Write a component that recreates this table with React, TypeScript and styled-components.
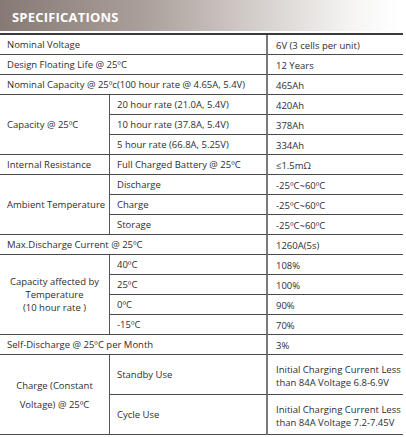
import React from "react";
import styled, { createGlobalStyle } from "styled-components";

const Global = createGlobalStyle`
  html, body { margin: 0; padding: 0; background: #ffffff; }
  body { font-family: "Open Sans", "Liberation Sans", sans-serif; color: #2e2e2e; }
`;

const Page = styled.div`
  width: 403px;
  display: flex;
  flex-direction: column;
`;

const Header = styled.div`
  height: 31px;
  display: flex;
  align-items: center;
  padding-left: 12px;
  padding-top: 2px;
  box-sizing: border-box;
  background: linear-gradient(to right, #877a74 0%, #a99e99 35%, #d6d0cd 65%, #f6f5f4 88%, #ffffff 100%);
  margin-right: 3px;
`;

const Title = styled.h1`
  margin: 0;
  font-size: 13px;
  font-weight: 700;
  color: #ffffff;
  letter-spacing: 0.2px;
`;

const Grid = styled.div`
  margin-top: 2px;
  border-top: 2px solid #3a3a3a;
  display: grid;
  grid-template-columns: 110px 158px 1fr;
  grid-auto-rows: 20px;
  font-size: 9.5px;
  line-height: 12px;
`;

type CellProps = {
  $col: string;
  $row?: string;
  $center?: boolean;
  $pad?: number;
};

const Cell = styled.div<CellProps>`
  grid-column: ${(p) => p.$col};
  grid-row: ${(p) => p.$row ?? "auto"};
  display: flex;
  align-items: center;
  justify-content: ${(p) => (p.$center ? "center" : "flex-start")};
  text-align: ${(p) => (p.$center ? "center" : "left")};
  padding-left: ${(p) => p.$pad ?? 7}px;
  border-bottom: 1px solid #4a4a4a;
  box-sizing: border-box;
  min-width: 0;
  white-space: nowrap;
`;

const LabelCell = styled(Cell)`
  border-right: 1px solid #555;
`;

const MidCell = styled(Cell)`
  border-right: 2px solid #7a7a7a;
  padding-left: 7px;
`;

const ValueCell = styled(Cell)`
  padding-left: 8px;
  padding-top: 2px;
`;

const WideCell = styled(Cell)`
  border-right: 2px solid #7a7a7a;
`;

const Multi = styled.span<{ $lh: number }>`
  white-space: normal;
  line-height: ${(p) => p.$lh}px;
`;

const ValueText = styled.span`
  white-space: normal;
  line-height: 13px;
`;

const simple: [string, string][] = [
  ["Nominal Voltage", "6V (3 cells per unit)"],
  ["Design Floating Life @ 25ºC", "12 Years"],
  ["Nominal Capacity @ 25ºc(100 hour rate @ 4.65A, 5.4V)", "465Ah"],
];

export default function App() {
  return (
    <>
      <Global />
      <Page>
        <Header>
          <Title>SPECIFICATIONS</Title>
        </Header>
        <Grid>
          {simple.map(([a, b]) => (
            <React.Fragment key={a}>
              <WideCell $col="1 / 3">{a}</WideCell>
              <ValueCell $col="3">{b}</ValueCell>
            </React.Fragment>
          ))}

          <LabelCell $col="1" $row="span 3">Capacity @ 25ºC</LabelCell>
          <MidCell $col="2">20 hour rate (21.0A, 5.4V)</MidCell>
          <ValueCell $col="3">420Ah</ValueCell>
          <MidCell $col="2">10 hour rate (37.8A, 5.4V)</MidCell>
          <ValueCell $col="3">378Ah</ValueCell>
          <MidCell $col="2">5 hour rate (66.8A, 5.25V)</MidCell>
          <ValueCell $col="3">334Ah</ValueCell>

          <LabelCell $col="1">Internal Resistance</LabelCell>
          <MidCell $col="2">Full Charged Battery @ 25ºC</MidCell>
          <ValueCell $col="3">≤1.5mΩ</ValueCell>

          <LabelCell $col="1" $row="span 3">Ambient Temperature</LabelCell>
          <MidCell $col="2">Discharge</MidCell>
          <ValueCell $col="3">-25ºC~60ºC</ValueCell>
          <MidCell $col="2">Charge</MidCell>
          <ValueCell $col="3">-25ºC~60ºC</ValueCell>
          <MidCell $col="2">Storage</MidCell>
          <ValueCell $col="3">-25ºC~60ºC</ValueCell>

          <WideCell $col="1 / 3">Max.Discharge Current @ 25ºC</WideCell>
          <ValueCell $col="3">1260A(5s)</ValueCell>

          <LabelCell $col="1" $row="span 4" $center $pad={0}>
            <Multi $lh={13}>
              Capacity affected by
              <br />
              Temperature
              <br />
              (10 hour rate )
            </Multi>
          </LabelCell>
          <MidCell $col="2">40ºC</MidCell>
          <ValueCell $col="3">108%</ValueCell>
          <MidCell $col="2">25ºC</MidCell>
          <ValueCell $col="3">100%</ValueCell>
          <MidCell $col="2">0ºC</MidCell>
          <ValueCell $col="3">90%</ValueCell>
          <MidCell $col="2">-15ºC</MidCell>
          <ValueCell $col="3">70%</ValueCell>

          <WideCell $col="1 / 3">Self-Discharge @ 25ºC per Month</WideCell>
          <ValueCell $col="3">3%</ValueCell>

          <LabelCell $col="1" $row="span 4" $center $pad={0}>
            <Multi $lh={19}>
              Charge (Constant
              <br />
              Voltage) @ 25ºC
            </Multi>
          </LabelCell>
          <MidCell $col="2" $row="span 2">Standby Use</MidCell>
          <ValueCell $col="3" $row="span 2">
            <ValueText>
              Initial Charging Current Less
              <br />
              than 84A Voltage 6.8-6.9V
            </ValueText>
          </ValueCell>
          <MidCell $col="2" $row="span 2">Cycle Use</MidCell>
          <ValueCell $col="3" $row="span 2">
            <ValueText>
              Initial Charging Current Less
              <br />
              than 84A Voltage 7.2-7.45V
            </ValueText>
          </ValueCell>
        </Grid>
      </Page>
    </>
  );
}
